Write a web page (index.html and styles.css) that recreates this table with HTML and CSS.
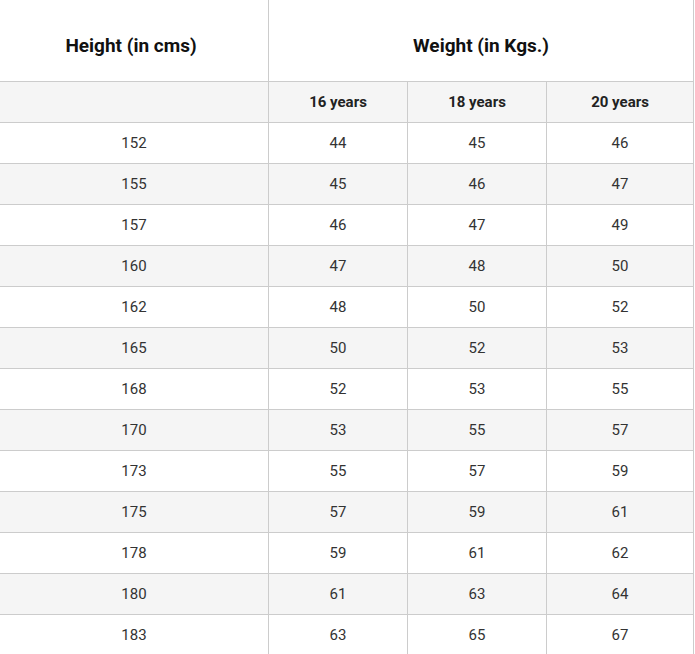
FILE: index.html
```html
<!DOCTYPE html>
<html>
<head>
<meta charset="utf-8">
<link rel="stylesheet" href="styles.css">
</head>
<body>
<table class="weight-table">
  <colgroup>
    <col class="c1"><col class="c2"><col class="c3"><col class="c4">
  </colgroup>
  <thead>
    <tr class="head">
      <th class="h-height">Height (in cms)</th>
      <th colspan="3">Weight (in Kgs.)</th>
    </tr>
  </thead>
  <tbody>
    <tr class="sub alt"><td></td><td>16 years</td><td>18 years</td><td>20 years</td></tr>
    <tr><td>152</td><td>44</td><td>45</td><td>46</td></tr>
    <tr class="alt"><td>155</td><td>45</td><td>46</td><td>47</td></tr>
    <tr><td>157</td><td>46</td><td>47</td><td>49</td></tr>
    <tr class="alt"><td>160</td><td>47</td><td>48</td><td>50</td></tr>
    <tr><td>162</td><td>48</td><td>50</td><td>52</td></tr>
    <tr class="alt"><td>165</td><td>50</td><td>52</td><td>53</td></tr>
    <tr><td>168</td><td>52</td><td>53</td><td>55</td></tr>
    <tr class="alt"><td>170</td><td>53</td><td>55</td><td>57</td></tr>
    <tr><td>173</td><td>55</td><td>57</td><td>59</td></tr>
    <tr class="alt"><td>175</td><td>57</td><td>59</td><td>61</td></tr>
    <tr><td>178</td><td>59</td><td>61</td><td>62</td></tr>
    <tr class="alt"><td>180</td><td>61</td><td>63</td><td>64</td></tr>
    <tr><td>183</td><td>63</td><td>65</td><td>67</td></tr>
  </tbody>
</table>
</body>
</html>
```
FILE: styles.css
```css
html, body {
  margin: 0;
  padding: 0;
  background: #ffffff;
}
body {
  font-family: Roboto, "Liberation Sans", Arial, sans-serif;
  color: #333333;
  overflow: hidden;
}
.weight-table {
  width: 694px;
  table-layout: fixed;
  border-collapse: separate;
  border-spacing: 0;
}
.c1 { width: 269px; }
.c2 { width: 139px; }
.c3 { width: 139px; }
.c4 { width: 147px; }
.weight-table th,
.weight-table td {
  box-sizing: border-box;
  border-right: 1px solid #cccccc;
  border-bottom: 1px solid #cccccc;
  text-align: center;
  padding: 0;
}
.head th {
  height: 82px;
  padding-top: 9px;
  font-size: 19px;
  font-weight: 700;
  color: #111111;
}
.head .h-height {
  padding-right: 6px;
}
.weight-table td {
  height: 41px;
  font-size: 15px;
}
.sub td {
  font-size: 15px;
  font-weight: 700;
  color: #222222;
}
.alt td {
  background: #f5f5f5;
}
```
